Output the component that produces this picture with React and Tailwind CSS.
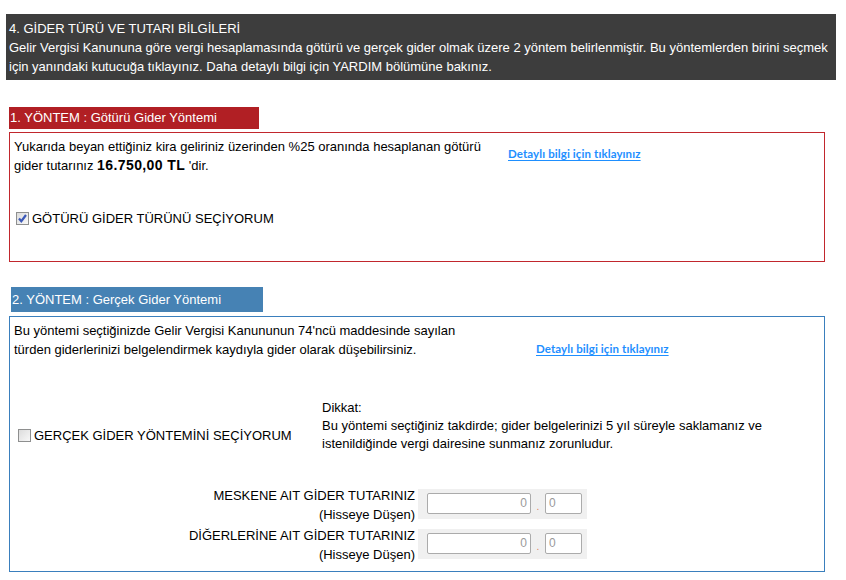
import React from "react";

function Box({ checked }) {
  return (
    <span className="inline-flex w-[13px] h-[13px] shrink-0 border border-[#8e8f8f] bg-gradient-to-br from-[#dcdcdc] to-[#f8f8f8] items-center justify-center">
      {checked && (
        <svg width="11" height="11" viewBox="0 0 11 11">
          <path d="M2 5.5 L4.3 8.2 L9 2" fill="none" stroke="#3c59b8" strokeWidth="2.2" />
        </svg>
      )}
    </span>
  );
}

function Link() {
  return (
    <a className="font-['Lato',sans-serif] font-bold text-[11.5px] leading-[14px] tracking-[0.1px] text-[#1e8fff] underline decoration-1 underline-offset-2 whitespace-nowrap">
      Detaylı bilgi için tıklayınız
    </a>
  );
}

function AmountRow({ label }) {
  return (
    <div className="flex items-start">
      <div className="w-[405px] text-right leading-[19px]">
        {label}
        <br />
        (Hisseye Düşen)
      </div>
      <div className="ml-[3px] mt-[3px] w-[169px] h-[30px] bg-[#f0f0f0] flex items-start pt-[4px] pl-[9px]">
        <div className="w-[104px] h-[21px] border border-[#ababab] rounded-[2px] bg-white text-right pr-[3px] text-[12px] leading-[19px] text-[#9a9a9a]">
          0
        </div>
        <span className="w-[14px] text-center text-[#e0805a] text-[10px] leading-[28px]">.</span>
        <div className="w-[37px] h-[21px] border border-[#ababab] rounded-[2px] bg-white pl-[3px] text-[12px] leading-[19px] text-[#9a9a9a]">
          0
        </div>
      </div>
    </div>
  );
}

export default function App() {
  return (
    <div className="w-[846px] h-[580px] bg-white font-['Liberation_Sans',Arial,sans-serif] text-[13px] text-black pt-[14px] pl-[6px]">
      <div className="w-[830px] bg-[#3d3d3d] text-white leading-[19px] pt-[5px] pb-[4px] pl-[3px]">
        <div>4. GİDER TÜRÜ VE TUTARI BİLGİLERİ</div>
        <div>
          Gelir Vergisi Kanununa göre vergi hesaplamasında götürü ve gerçek gider olmak üzere 2 yöntem belirlenmiştir. Bu yöntemlerden birini seçmek
          <br />
          için yanındaki kutucuğa tıklayınız. Daha detaylı bilgi için YARDIM bölümüne bakınız.
        </div>
      </div>

      <div className="ml-[3px] mt-[27px] w-[250px] h-[22px] bg-[#b11f24] text-white pl-[1px] leading-[22px]">
        1. YÖNTEM : Götürü Gider Yöntemi
      </div>
      <div className="ml-[3px] mt-[3px] w-[816px] h-[130px] border border-[#c1272d]">
        <div className="flex">
          <div className="w-[498px] pl-[4px] pt-[5px] leading-[18px]">
            Yukarıda beyan ettiğiniz kira geliriniz üzerinden %25 oranında hesaplanan götürü
            <br />
            gider tutarınız <b className="text-[14px] tracking-[0.4px]">16.750,00 TL</b> 'dir.
          </div>
          <div className="pt-[11px]">
            <Link />
          </div>
        </div>
        <div className="flex items-center mt-[37px] ml-[6px] gap-[3px] leading-[13px]">
          <Box checked />
          <span>GÖTÜRÜ GİDER TÜRÜNÜ SEÇİYORUM</span>
        </div>
      </div>

      <div className="ml-[5px] mt-[25px] w-[252px] h-[25px] bg-[#4682b4] text-white pl-[1px] leading-[25px]">
        2. YÖNTEM : Gerçek Gider Yöntemi
      </div>
      <div className="ml-[3px] mt-[4px] w-[816px] h-[256px] border border-[#3a7fbd]">
        <div className="flex">
          <div className="w-[526px] pl-[4px] pt-[4px] leading-[19px]">
            Bu yöntemi seçtiğinizde Gelir Vergisi Kanununun 74'ncü maddesinde sayılan
            <br />
            türden giderlerinizi belgelendirmek kaydıyla gider olarak düşebilirsiniz.
          </div>
          <div className="pt-[22px]">
            <Link />
          </div>
        </div>
        <div className="flex mt-[40px]">
          <div className="w-[312px] pl-[8px] pt-[19px] flex items-center gap-[3px] leading-[13px]">
            <Box />
            <span>GERÇEK GİDER YÖNTEMİNİ SEÇİYORUM</span>
          </div>
          <div className="leading-[18px]">
            Dikkat:
            <br />
            Bu yöntemi seçtiğiniz takdirde; gider belgelerinizi 5 yıl süreyle saklamanız ve
            <br />
            istenildiğinde vergi dairesine sunmanız zorunludur.
          </div>
        </div>
        <div className="mt-[33px] flex flex-col gap-[2px]">
          <AmountRow label="MESKENE AIT GİDER TUTARINIZ" />
          <AmountRow label="DİĞERLERİNE AIT GİDER TUTARINIZ" />
        </div>
      </div>
    </div>
  );
}
